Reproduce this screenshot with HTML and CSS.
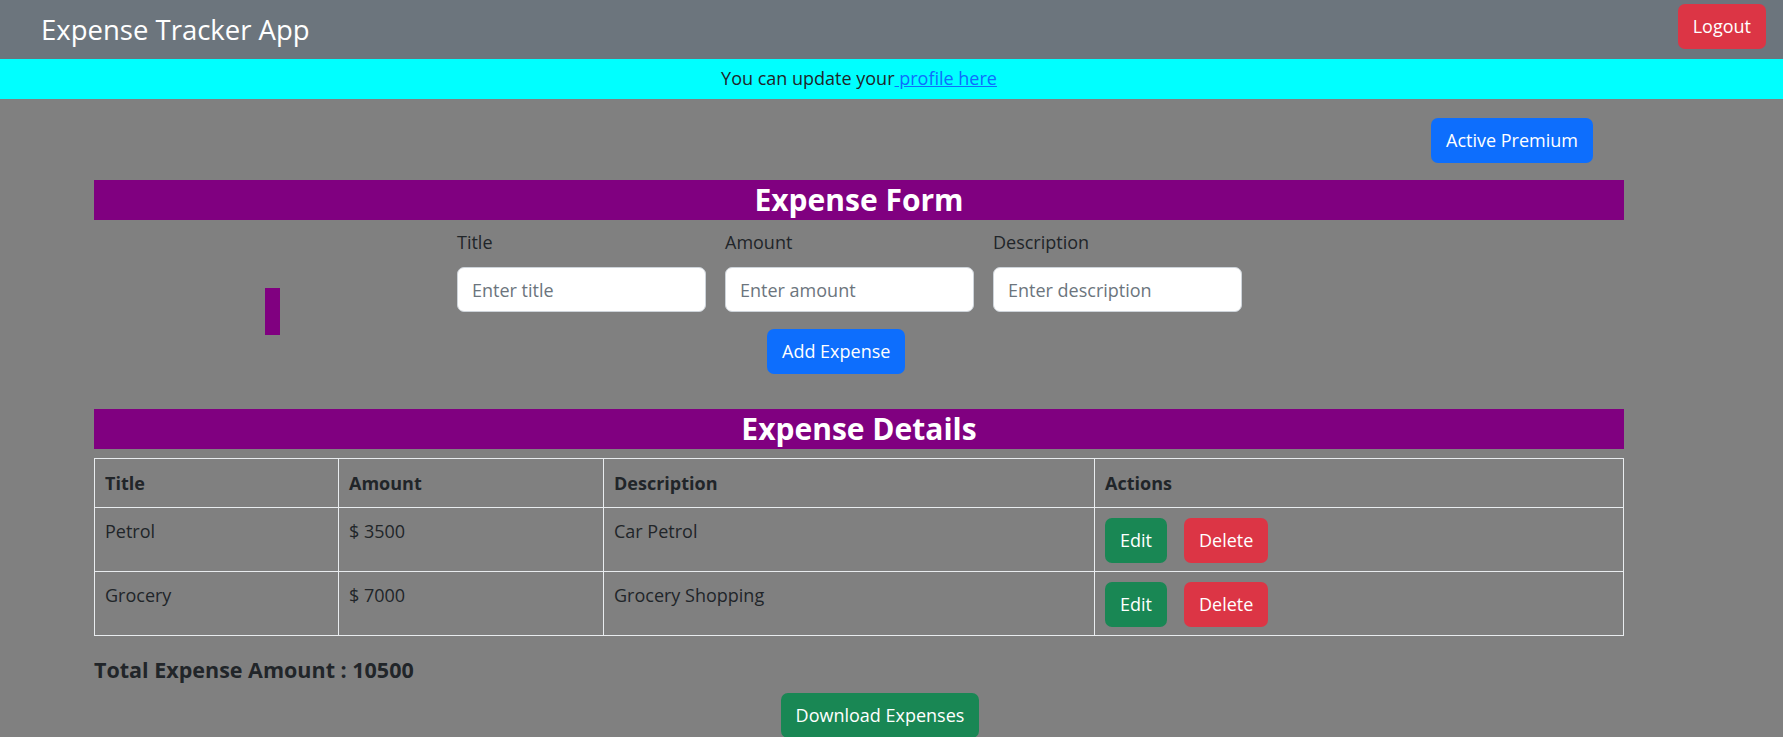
FILE: index.html
```html
<!DOCTYPE html>
<html>
<head>
<meta charset="utf-8">
<title>Expense Tracker App</title>
<link rel="stylesheet" href="styles.css">
</head>
<body>
<header class="navbar">
  <span class="brand">Expense Tracker App</span>
  <button class="btn btn-danger btn-logout">Logout</button>
</header>
<div class="notice"><div class="notice-inner">You can update your<a href="#"> profile here</a></div></div>
<main class="container">
  <div class="premium-row">
    <button class="btn btn-primary">Active Premium</button>
  </div>
  <h2 class="section-title">Expense Form</h2>
  <div class="form-area">
    <div class="form-side"><div class="side-bar"></div></div>
    <div class="form-main">
      <div class="fields">
        <div class="field">
          <label>Title</label>
          <input type="text" placeholder="Enter title">
        </div>
        <div class="field">
          <label>Amount</label>
          <input type="text" placeholder="Enter amount">
        </div>
        <div class="field">
          <label>Description</label>
          <input type="text" placeholder="Enter description">
        </div>
      </div>
      <div class="submit-row">
        <button class="btn btn-primary">Add Expense</button>
      </div>
    </div>
  </div>
  <h2 class="section-title">Expense Details</h2>
  <table class="expenses">
    <thead>
      <tr><th class="c1">Title</th><th class="c2">Amount</th><th class="c3">Description</th><th class="c4">Actions</th></tr>
    </thead>
    <tbody>
      <tr>
        <td>Petrol</td><td>$ 3500</td><td>Car Petrol</td>
        <td class="actions"><button class="btn btn-success">Edit</button><button class="btn btn-danger">Delete</button></td>
      </tr>
      <tr>
        <td>Grocery</td><td>$ 7000</td><td>Grocery Shopping</td>
        <td class="actions"><button class="btn btn-success">Edit</button><button class="btn btn-danger">Delete</button></td>
      </tr>
    </tbody>
  </table>
  <h5 class="total">Total Expense Amount : 10500</h5>
  <div class="download-row">
    <button class="btn btn-success">Download Expenses</button>
  </div>
</main>
</body>
</html>
```
FILE: styles.css
```css
* { box-sizing: border-box; }
html, body { margin: 0; padding: 0; }
body {
  background: #808080;
  font-family: "Open Sans", "Noto Sans", sans-serif;
  font-size: 18px;
  color: #212529;
  overflow: hidden;
}
.btn {
  font-family: inherit;
  font-size: 18px;
  line-height: 27px;
  padding: 8px 14px;
  border: 1px solid transparent;
  border-radius: 7px;
  color: #fff;
  cursor: pointer;
}
.btn-primary { background: #0d6efd; }
.btn-danger { background: #dc3545; }
.btn-success { background: #198754; }

.navbar {
  height: 59px;
  background: #6c757d;
  display: flex;
  align-items: center;
  justify-content: space-between;
  padding: 0 17px 0 41px;
}
.brand {
  color: #fff;
  font-size: 27.5px;
  line-height: 1.2;
}
.btn-logout { margin-top: -6px; }

.notice {
  height: 40px;
  background: #00ffff;
}
.notice-inner {
  width: 1530px;
  margin-left: 94px;
  text-align: center;
  line-height: 38px;
  font-size: 18px;
}
.notice a { color: #0d6efd; text-decoration: underline; }

.container {
  width: 1530px;
  margin-left: 94px;
}
.premium-row {
  display: flex;
  justify-content: flex-end;
  padding: 19px 31px 17px 0;
}
.section-title {
  margin: 0;
  height: 40px;
  line-height: 40px;
  background: #800080;
  color: #fff;
  text-align: center;
  font-size: 30px;
  font-weight: 700;
}
.form-area {
  display: flex;
  padding: 9px 0 35px;
}
.form-side {
  width: 363px;
  display: flex;
  align-items: center;
  justify-content: center;
  padding-top: 20px;
  padding-right: 6px;
}
.side-bar {
  width: 15px;
  height: 47px;
  background: #800080;
}
.form-main { display: flex; flex-direction: column; }
.fields { display: flex; gap: 19px; }
.field { display: flex; flex-direction: column; width: 249px; }
.field label { line-height: 27px; margin-bottom: 11px; }
.field input {
  height: 45px;
  border: 1px solid #ced4da;
  border-radius: 7px;
  padding: 0 14px;
  font-family: inherit;
  font-size: 18px;
  color: #212529;
  background: #fff;
}
.field input::placeholder { color: #6c757d; }
.submit-row { padding: 17px 0 0 310px; }

.expenses {
  width: 100%;
  border-collapse: collapse;
  margin-top: 9px;
  table-layout: fixed;
}
.expenses th, .expenses td {
  border: 1px solid #e9ecef;
  text-align: left;
  vertical-align: top;
  padding: 10px 10px;
  line-height: 27px;
}
.expenses th { height: 49px; font-weight: 700; vertical-align: middle; }
.expenses td { height: 64px; }
.expenses td.actions { padding-top: 9px; padding-bottom: 8px; vertical-align: middle; }
.c1 { width: 244px; }
.c2 { width: 265px; }
.c3 { width: 491px; }
.actions .btn { margin-right: 17px; }

.total {
  margin: 19px 0 0;
  font-size: 21.5px;
  font-weight: 700;
  line-height: 30px;
}
.download-row {
  display: flex;
  justify-content: center;
  padding: 8px 0 0 42px;
}
```
